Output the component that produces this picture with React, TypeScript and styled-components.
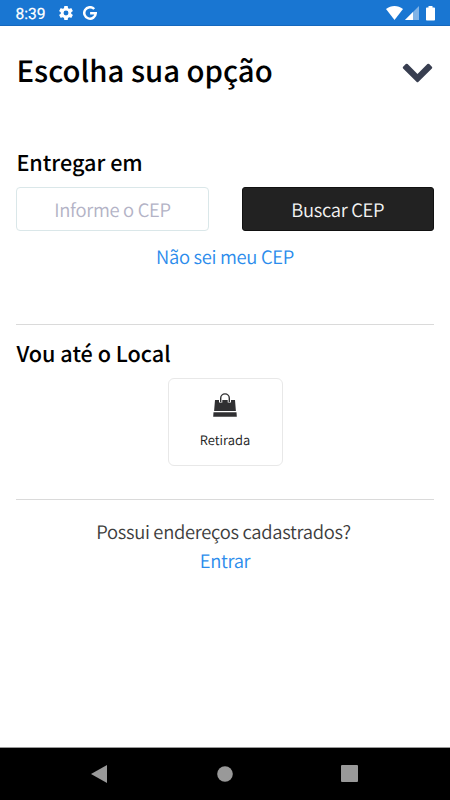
import React from 'react';
import styled, { createGlobalStyle } from 'styled-components';

const GlobalStyle = createGlobalStyle`
  * { box-sizing: border-box; }
  body { margin: 0; background: #fff; }
`;

const Screen = styled.div`
  width: 450px;
  height: 800px;
  display: flex;
  flex-direction: column;
  overflow: hidden;
  background: #fff;
  color: #000;
  font-family: 'Noto Sans CJK SC', 'Noto Sans', sans-serif;
  text-rendering: geometricPrecision;
`;

const StatusBar = styled.header`
  height: 26px;
  flex: none;
  display: flex;
  align-items: center;
  justify-content: space-between;
  padding: 0 15.5px;
  background: #1976d2;
  border-bottom: 1px solid #1568be;
  color: #fff;
`;

const StatusGroup = styled.div`
  display: flex;
  align-items: center;
  height: 25px;
`;

const Clock = styled.span`
  width: 43px;
  padding-top: 2px;
  font: 400 15.6px/24px Roboto, sans-serif;
  -webkit-text-stroke: 0.2px #fff;
`;

const Icon = styled.svg<{ $gap?: number; $drop?: number }>`
  display: block;
  flex: none;
  margin-left: ${({ $gap = 0 }) => $gap}px;
  margin-top: ${({ $drop = 0 }) => $drop}px;
`;

const Content = styled.main`
  flex: 1;
  display: flex;
  flex-direction: column;
  padding: 0 16px;
`;

const TitleRow = styled.div`
  height: 90px;
  padding: 0 1px 3px 0;
  display: flex;
  align-items: center;
  justify-content: space-between;
`;

const Title = styled.h1`
  margin: 0 0 0 0.5px;
  font-size: 29.3px;
  line-height: 40px;
  font-weight: 500;
  white-space: nowrap;
`;

const Section = styled.section<{ $height: number; $top: number }>`
  height: ${({ $height }) => $height}px;
  padding-top: ${({ $top }) => $top}px;
  display: flex;
  flex-direction: column;
  align-items: center;
  border-bottom: 1px solid #dadada;
`;

const SectionTitle = styled.h2`
  align-self: flex-start;
  margin: 0 0 0 0.4px;
  font-size: 21.6px;
  line-height: 30px;
  font-weight: 500;
  white-space: nowrap;
`;

const FormRow = styled.div`
  width: 100%;
  margin-top: 9px;
  display: grid;
  grid-template-columns: 193px 192.5px;
  justify-content: space-between;
`;

const CepInput = styled.input`
  width: 100%;
  height: 44px;
  padding: 2px 0 0;
  border: 1px solid #dae7e9;
  border-radius: 4px;
  background: #fff;
  text-align: center;
  font: 350 18.4px/28px 'Noto Sans CJK SC', sans-serif;
  letter-spacing: -0.3px;
  text-rendering: geometricPrecision;
  &::placeholder { color: #b3b3c6; opacity: 1; }
`;

const SearchButton = styled.button`
  height: 44px;
  padding: 2px 0 0;
  border: 1px solid #111;
  border-radius: 3px;
  background: #222;
  color: #f4f4f4;
  font: 350 18.4px/28px 'Noto Sans CJK SC', sans-serif;
  letter-spacing: -0.3px;
  text-rendering: geometricPrecision;
`;

const TextLink = styled.a<{ $top: number }>`
  margin-top: ${({ $top }) => $top}px;
  color: #2b8cec;
  font-size: 18.4px;
  line-height: 28px;
  font-weight: 350;
  letter-spacing: -0.3px;
`;

const PickupCard = styled.button`
  width: 115px;
  height: 88px;
  margin-top: 9px;
  padding: 14px 0 0;
  display: flex;
  flex-direction: column;
  align-items: center;
  border: 1px solid #e8e8e8;
  border-radius: 6px;
  background: #fff;
  color: #222;
  font: 350 13px/20px 'Noto Sans CJK SC', sans-serif;
  text-rendering: geometricPrecision;
`;

const PickupLabel = styled.span`
  margin-top: 13px;
`;

const SignIn = styled.section`
  padding-top: 18px;
  display: flex;
  flex-direction: column;
  align-items: center;
`;

const Question = styled.p`
  margin: 0 3px 0 0;
  color: #3d3d3d;
  font-size: 18.4px;
  line-height: 28px;
  font-weight: 350;
  letter-spacing: -0.3px;
`;

const NavBar = styled.nav`
  height: 53px;
  flex: none;
  display: flex;
  align-items: center;
  justify-content: space-between;
  padding: 0 92px 1px 91px;
  background: #000;
  border-top: 1px solid #999;
`;

export default function App() {
  return (
    <>
      <GlobalStyle />
      <Screen>
        <StatusBar>
          <StatusGroup>
            <Clock>8:39</Clock>
            <Icon width="14" height="14" viewBox="2 2 20 20" fill="#fff">
              <path d="M19.43 12.98c.04-.32.07-.64.07-.98s-.03-.66-.07-.98l2.11-1.65c.19-.15.24-.42.12-.64l-2-3.46c-.12-.22-.39-.3-.61-.22l-2.49 1c-.52-.4-1.08-.73-1.69-.98l-.38-2.65C14.46 2.18 14.25 2 14 2h-4c-.25 0-.46.18-.49.42l-.38 2.65c-.61.25-1.17.59-1.69.98l-2.49-1c-.23-.09-.49 0-.61.22l-2 3.46c-.13.22-.07.49.12.64l2.11 1.65c-.04.32-.07.65-.07.98s.03.66.07.98l-2.11 1.65c-.19.15-.24.42-.12.64l2 3.46c.12.22.39.3.61.22l2.49-1c.52.4 1.08.73 1.69.98l.38 2.65c.03.24.24.42.49.42h4c.25 0 .46-.18.49-.42l.38-2.65c.61-.25 1.17-.59 1.69-.98l2.49 1c.23.09.49 0 .61-.22l2-3.46c.12-.22.07-.49-.12-.64l-2.11-1.65zM12 15.5A3.5 3.5 0 1 1 12 8.5a3.5 3.5 0 0 1 0 7z" />
            </Icon>
            <Icon $gap={10.5} width="14" height="14" viewBox="0 0 14 14" fill="none" stroke="#fff" strokeWidth="2.5">
              <path d="M11.2 3A5.75 5.75 0 1 0 12.75 7.2H7.1" />
            </Icon>
          </StatusGroup>
          <StatusGroup>
            <Icon width="17" height="14" viewBox="0 0 17 14" fill="#fff">
              <path d="M0 3C5-.9 12-.9 17 3L8.5 14Z" />
            </Icon>
            <Icon $gap={2} $drop={1} width="14" height="14" viewBox="0 0 14 14" fill="#fff">
              <path d="M0 14L14 0V14Z" opacity=".45" />
              <path d="M0 14L8 6V14Z" />
            </Icon>
            <Icon $gap={7} $drop={1} width="9" height="15" viewBox="0 0 9 15" fill="#fff">
              <path d="M2.5 0h4v1.5H8.2c.5 0 .8.3.8.8v11.4c0 .5-.3.8-.8.8H.8c-.5 0-.8-.3-.8-.8V2.3c0-.5.3-.8.8-.8h1.7Z" />
            </Icon>
          </StatusGroup>
        </StatusBar>
        <Content>
          <TitleRow>
            <Title>Escolha sua opção</Title>
            <Icon $drop={7} width="31" height="20" viewBox="0 0 31 20" fill="#383e50">
              <path d="M1.1 3.8L3.8 1.1Q4.7.3 5.6 1.1L15.5 11L25.4 1.1Q26.3.3 27.2 1.1L29.9 3.8Q30.7 4.7 29.9 5.6L16.5 18.8Q15.5 19.8 14.5 18.8L1.100 5.600Q.3 4.700 1.100 3.800Z" />
            </Icon>
          </TitleRow>
          <Section $height={209} $top={32}>
            <SectionTitle>Entregar em</SectionTitle>
            <FormRow>
              <CepInput placeholder="Informe o CEP" />
              <SearchButton>Buscar CEP</SearchButton>
            </FormRow>
            <TextLink $top={12}>Não sei meu CEP</TextLink>
          </Section>
          <Section $height={175} $top={14}>
            <SectionTitle>Vou até o Local</SectionTitle>
            <PickupCard>
              <Icon width="24" height="24" viewBox="0 0 24 24" fill="#303032">
                <path d="M2 7H6V9.500H9.300V7h5.400v2.500H18V7h4l.9 11H1.100Z" />
                <path d="M7.700 9V5.200a4.300 4.300 0 0 1 8.600 0V9" fill="none" stroke="#303032" strokeWidth="1.400" />
                <path d="M.5 19.200h23l.3 4.600H.2Z" />
              </Icon>
              <PickupLabel>Retirada</PickupLabel>
            </PickupCard>
          </Section>
          <SignIn>
            <Question>Possui endereços cadastrados?</Question>
            <TextLink $top={1}>Entrar</TextLink>
          </SignIn>
        </Content>
        <NavBar>
          <Icon width="16" height="18" viewBox="0 0 16 18" fill="#999"><path d="M16 0V18L0 9Z" /></Icon>
          <Icon $gap={1} width="16" height="16" viewBox="0 0 16 16" fill="#999"><circle cx="8" cy="8" r="7.8" /></Icon>
          <Icon width="17" height="17" viewBox="0 0 17 17" fill="#999"><rect width="17" height="17" rx="1" /></Icon>
        </NavBar>
      </Screen>
    </>
  );
}
